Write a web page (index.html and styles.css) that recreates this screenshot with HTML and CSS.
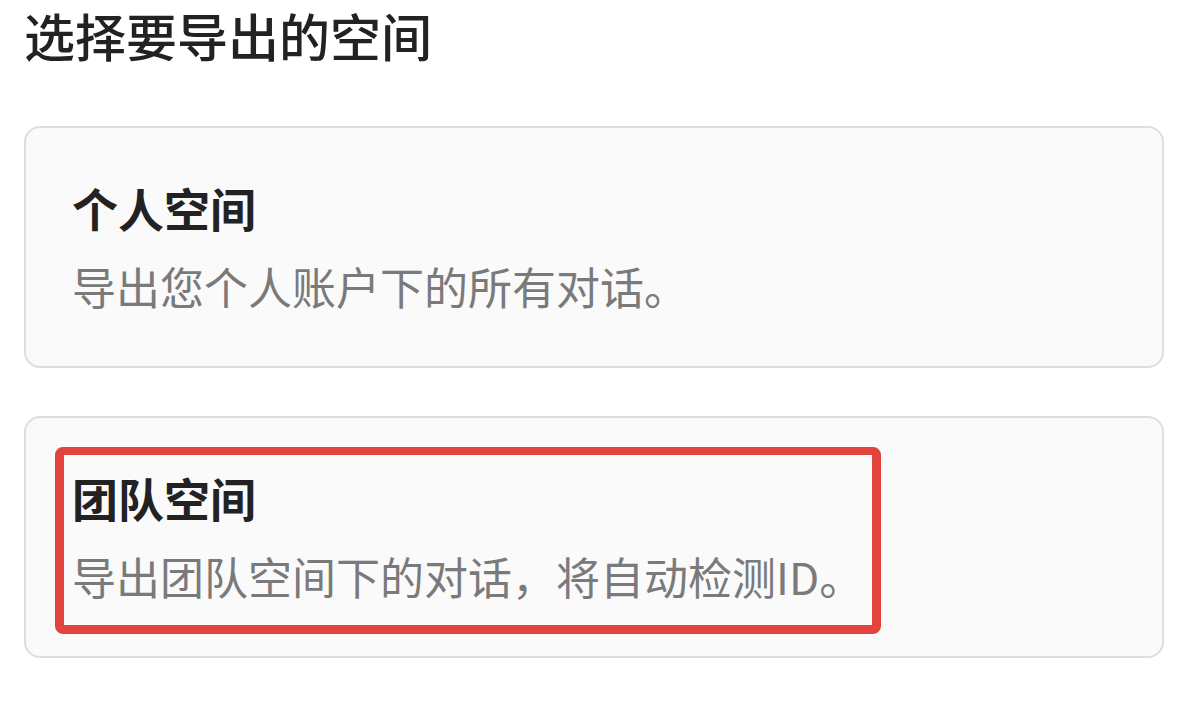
FILE: index.html
```html
<!DOCTYPE html>
<html lang="zh-CN">

<head>
    <meta charset="UTF-8">
    <meta name="viewport" content="width=device-width, initial-scale=1.0">
    <title>选择要导出的空间</title>
    <link rel="stylesheet" href="styles.css">
</head>

<body>
    <div id="app">
        <h1 class="page-title">选择要导出的空间</h1>

        <div class="space-list">
            <div class="space-card">
                <div class="space-body">
                    <div class="space-name">个人空间</div>
                    <div class="space-desc">导出您个人账户下的所有对话。</div>
                </div>
            </div>

            <div class="space-card">
                <div class="space-body marked">
                    <div class="space-name">团队空间</div>
                    <div class="space-desc">导出团队空间下的对话，将自动检测ID。</div>
                </div>
            </div>
        </div>
    </div>
</body>

</html>
```

FILE: styles.css
```css
body,
html {
    margin: 0;
    padding: 0;
    background-color: #ffffff;
    font-family: "Noto Sans CJK SC", "Noto Sans", sans-serif;
}

#app {
    padding: 0 26px 0 24px;
}

.page-title {
    margin: 0;
    font-size: 51px;
    line-height: 70px;
    font-weight: 500;
    color: #222222;
    margin-bottom: 56px;
}

.space-list {
    display: flex;
    flex-direction: column;
    gap: 48px;
}

.space-card {
    height: 242px;
    box-sizing: border-box;
    background-color: #fafafa;
    border: 2px solid #dedede;
    border-radius: 16px;
    padding: 49px 46px 0;
}

.space-body {
    width: fit-content;
}

.space-body.marked {
    border: solid #e2433c;
    border-width: 8px 9px 9px 9px;
    border-radius: 8px;
    padding: 12px 9px 19px 8px;
    margin: -20px -18px 0 -17px;
}

.space-name {
    font-size: 46px;
    line-height: 60px;
    font-weight: 700;
    color: #222222;
}

.space-desc {
    margin-top: 19px;
    font-size: 44px;
    line-height: 60px;
    color: #7a7a7a;
}
```
